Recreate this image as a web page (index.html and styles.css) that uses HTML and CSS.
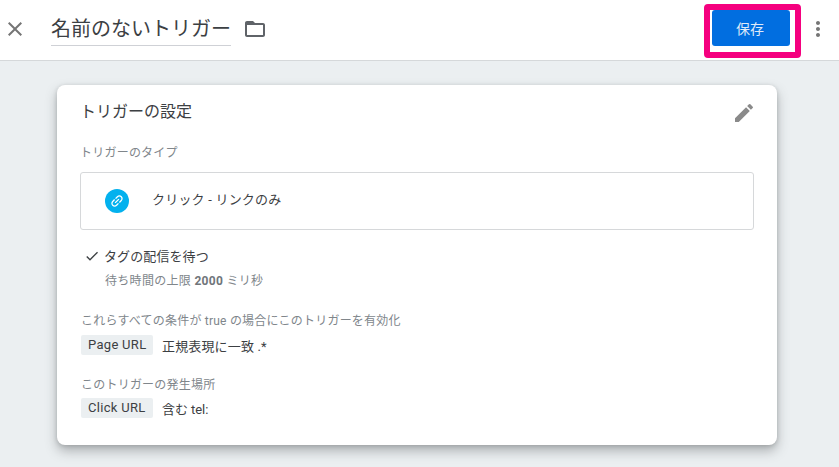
FILE: index.html
```html
<!DOCTYPE html>
<html lang="ja">
<head>
<meta charset="utf-8">
<title>トリガー</title>
<link rel="stylesheet" href="styles.css">
</head>
<body>
<header class="topbar">
  <svg class="icon-close" viewBox="0 0 24 24" width="24" height="24"><path d="M19 6.41 17.59 5 12 10.59 6.41 5 5 6.41 10.59 12 5 17.59 6.41 19 12 13.41 17.59 19 19 17.59 13.41 12z"/></svg>
  <div class="title">名前のないトリガー</div>
  <svg class="icon-folder" viewBox="0 0 24 24" width="24" height="24"><path d="M20 6h-8l-2-2H4c-1.1 0-1.99.9-1.99 2L2 18c0 1.1.9 2 2 2h16c1.100 0 2-.9 2-2V8c0-1.100-.9-2-2-2zm0 12H4V8h16v10z"/></svg>
  <div class="spacer"></div>
  <div class="save-frame"><button class="save">保存</button></div>
  <svg class="icon-more" viewBox="0 0 24 24" width="24" height="24"><path d="M12 8c1.100 0 2-.9 2-2s-.9-2-2-2-2 .9-2 2 .9 2 2 2zm0 2c-1.100 0-2 .9-2 2s.9 2 2 2 2-.9 2-2-.9-2-2-2zm0 6c-1.100 0-2 .9-2 2s.9 2 2 2 2-.9 2-2-.9-2-2-2z"/></svg>
</header>
<main class="stage">
  <section class="card">
    <div class="card-head">
      <h2 class="card-title">トリガーの設定</h2>
      <svg class="icon-edit" viewBox="0 0 24 24" width="24" height="24"><path d="M3 17.250V21h3.750L17.810 9.940l-3.750-3.750L3 17.250zM20.710 7.040a1 1 0 0 0 0-1.410l-2.340-2.340a1 1 0 0 0-1.410 0l-1.830 1.830 3.750 3.750 1.830-1.830z"/></svg>
    </div>
    <div class="label type-label">トリガーのタイプ</div>
    <div class="type-box">
      <span class="type-icon">
        <svg viewBox="0 0 24 24" width="16" height="16"><path d="M3.900 12c0-1.710 1.390-3.100 3.100-3.100h4V7H7c-2.760 0-5 2.240-5 5s2.240 5 5 5h4v-1.900H7c-1.710 0-3.100-1.390-3.100-3.100zM8 13h8v-2H8v2zm9-6h-4v1.900h4c1.710 0 3.100 1.390 3.100 3.100s-1.390 3.100-3.100 3.100h-4V17h4c2.760 0 5-2.240 5-5s-2.240-5-5-5z"/></svg>
      </span>
      <span class="type-name">クリック - リンクのみ</span>
    </div>
    <div class="wait-row">
      <svg class="icon-check" viewBox="0 0 24 24" width="16" height="16"><path d="M9 16.170 4.830 12l-1.420 1.410L9 19 21 7l-1.410-1.410z"/></svg>
      <span>タグの配信を待つ</span>
    </div>
    <div class="wait-note">待ち時間の上限 <b>2000</b> ミリ秒</div>
    <div class="label cond-label">これらすべての条件が true の場合にこのトリガーを有効化</div>
    <div class="cond"><span class="chip">Page URL</span><span>正規表現に一致 .*</span></div>
    <div class="label where-label">このトリガーの発生場所</div>
    <div class="cond"><span class="chip">Click URL</span><span class="tight">含む tel:</span></div>
  </section>
</main>
</body>
</html>
```

FILE: styles.css
```css
* { box-sizing: border-box; }
html, body { margin: 0; height: 100%; overflow: hidden; }
body {
  font-family: Roboto, "Noto Sans CJK JP", sans-serif;
  background: #ebeff1;
  color: #202124;
  display: flex;
  flex-direction: column;
}
.topbar {
  height: 61px;
  flex: none;
  background: #fff;
  border-bottom: 1px solid #d5d8da;
  display: flex;
  align-items: center;
  padding-left: 3px;
}
.icon-close { fill: #757575; flex: none; margin-top: -2px; }
.title {
  margin-left: 24px;
  width: 180px;
  height: 32px;
  margin-top: -1px;
  font-size: 20px;
  line-height: 31px;
  color: #3c4043;
  border-bottom: 1px solid #cfd1d6;
  white-space: nowrap;
}
.icon-folder { fill: #5f6368; margin-left: 12px; flex: none; margin-top: -2px; }
.spacer { flex: 1; }
.save-frame {
  width: 97px;
  height: 54px;
  border: 6px solid #f5007f;
  border-radius: 4px;
  padding: 0 0 0 2px;
  margin-top: 2px;
  margin-right: 5px;
  background: #fff;
}
.save {
  display: block;
  width: 78px;
  height: 36px;
  border: 0;
  padding: 0 2px 0 0;
  border-radius: 3px;
  background: #016ee0;
  color: #dfeaf8;
  font: 14px Roboto, "Noto Sans CJK JP", sans-serif;
}
.icon-more { fill: #757575; flex: none; margin-right: 9px; margin-top: -2px; }
.stage { flex: 1; padding: 24px 0 0 57px; }
.card {
  width: 720px;
  height: 360px;
  background: #fff;
  border-radius: 8px;
  box-shadow: 0 6px 12px rgba(60, 64, 67, .35), 0 1px 4px rgba(60, 64, 67, .2);
  padding: 12px 23px 0 24px;
}
.card-head { display: flex; justify-content: space-between; align-items: center; height: 26px; margin-left: -1px; }
.card-title { margin: 0; font-size: 16px; font-weight: 400; color: #3c4043; }
.icon-edit { fill: #8a8a8a; margin-right: -2px; margin-top: 5px; }
.label { font-size: 12px; line-height: 16px; color: #80868b; letter-spacing: .22px; }
.type-label { margin-top: 22px; margin-left: -1px; }
.type-box {
  margin-top: 11px;
  margin-left: -1px;
  width: 674px;
  height: 58px;
  border: 1px solid #d6d8da;
  border-radius: 3px;
  display: flex;
  align-items: center;
  padding-left: 24px;
}
.type-icon {
  width: 24px;
  height: 24px;
  border-radius: 50%;
  background: #03b1ee;
  display: flex;
  align-items: center;
  justify-content: center;
}
.type-icon svg { fill: #fff; transform: rotate(-45deg); }
.type-name { margin-left: 24px; margin-top: -5px; font-size: 13px; color: #3c4043; letter-spacing: .2px; margin-left: 23px; }
.wait-row {
  margin-top: 15px;
  margin-left: 4px;
  height: 20px;
  display: flex;
  align-items: center;
  gap: 4px;
  font-size: 13px;
  letter-spacing: .1px;
  color: #3c4043;
}
.icon-check { fill: #3c4043; flex: none; margin-top: 1px; margin-left: -1px; }
.wait-note { margin-top: 8px; margin-left: 24px; font-size: 12px; line-height: 16px; color: #80868b; letter-spacing: .3px; }
.wait-note b { font-weight: 700; color: #70757a; }
.cond-label { margin-top: 24px; }
.cond { margin-top: 6px; height: 20px; display: flex; align-items: center; font-size: 13px; letter-spacing: .15px; color: #3c4043; }
.chip {
  width: 72px;
  height: 20px;
  line-height: 20px;
  padding-left: 7px;
  margin-right: 9px;
  border-radius: 2px;
  background: #ebeff1;
  color: #3c4043;
  letter-spacing: .3px;
  white-space: nowrap;
}
.tight { letter-spacing: -.05px; }
.where-label { margin-top: 22px; }
.where-label + .cond { margin-top: 5px; }
```
